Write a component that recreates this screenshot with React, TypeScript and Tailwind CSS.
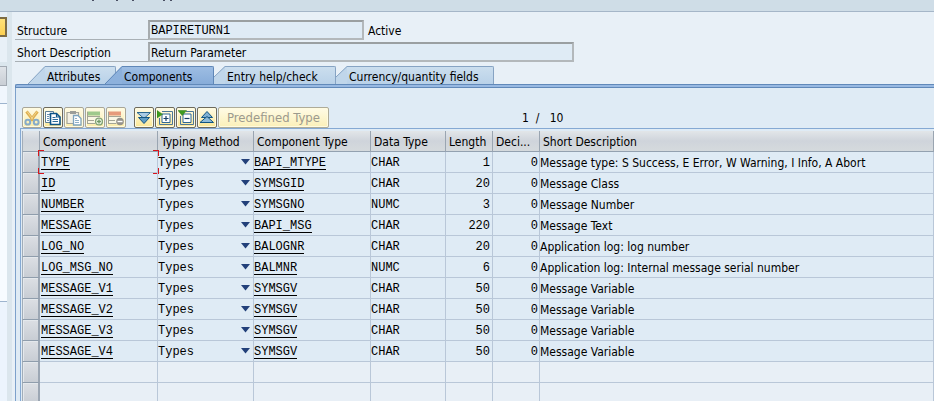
import React from "react";

type Row = {
  component: string;
  type: string;
  dataType: string;
  length: number;
  decimals: number;
  description: string;
};

const rows: Row[] = [
  { component: "TYPE", type: "BAPI_MTYPE", dataType: "CHAR", length: 1, decimals: 0, description: "Message type: S Success, E Error, W Warning, I Info, A Abort" },
  { component: "ID", type: "SYMSGID", dataType: "CHAR", length: 20, decimals: 0, description: "Message Class" },
  { component: "NUMBER", type: "SYMSGNO", dataType: "NUMC", length: 3, decimals: 0, description: "Message Number" },
  { component: "MESSAGE", type: "BAPI_MSG", dataType: "CHAR", length: 220, decimals: 0, description: "Message Text" },
  { component: "LOG_NO", type: "BALOGNR", dataType: "CHAR", length: 20, decimals: 0, description: "Application log: log number" },
  { component: "LOG_MSG_NO", type: "BALMNR", dataType: "NUMC", length: 6, decimals: 0, description: "Application log: Internal message serial number" },
  { component: "MESSAGE_V1", type: "SYMSGV", dataType: "CHAR", length: 50, decimals: 0, description: "Message Variable" },
  { component: "MESSAGE_V2", type: "SYMSGV", dataType: "CHAR", length: 50, decimals: 0, description: "Message Variable" },
  { component: "MESSAGE_V3", type: "SYMSGV", dataType: "CHAR", length: 50, decimals: 0, description: "Message Variable" },
  { component: "MESSAGE_V4", type: "SYMSGV", dataType: "CHAR", length: 50, decimals: 0, description: "Message Variable" },
];

const mono = "font-['Liberation_Mono',monospace] text-[12px]";

/* ---------- toolbar icons ---------- */

function Icon({ children }: { children: React.ReactNode }) {
  return (
    <svg width="16" height="16" viewBox="0 0 16 16" fill="none" aria-hidden="true">
      {children}
    </svg>
  );
}

const CutIcon = () => (
  <Icon>
    <path d="M2.500 1.500l7 9M13.500 1.500l-7 9" stroke="#dfb051" strokeWidth="3" />
    <path d="M3 1.500l6 8M13 1.500l-6 8" stroke="#f4dc9a" strokeWidth="0.800" />
    <circle cx="3.800" cy="12.200" r="2.400" stroke="#86abc9" strokeWidth="2" />
    <circle cx="12.200" cy="12.200" r="2.400" stroke="#86abc9" strokeWidth="2" />
  </Icon>
);

const CopyIcon = () => (
  <Icon>
    <path d="M0.500 1.500h8v11h-8z" fill="#fff" stroke="#5d7f97" />
    <path d="M2 4.500h3M2 6.500h2M2 8.500h2M2 10.500h2" stroke="#6c93b4" />
    <path d="M5.500 3.500h6l3.500 3.500v7.500H5.500z" fill="#fff" stroke="#0d5487" strokeWidth="1.600" />
    <path d="M11.500 3.500V7H15" stroke="#0d5487" strokeWidth="1.200" />
    <path d="M7.500 7.500h3M7.500 9.500H13M7.500 11.500H13" stroke="#2c6a9a" />
  </Icon>
);

const PasteIcon = () => (
  <Icon>
    <path d="M1 2.500h11.500v11H1z" fill="#f4f1e4" stroke="#a3a59c" strokeWidth="1.200" />
    <path d="M4 1h6v3H4z" fill="#9b9d98" />
    <path d="M7.500 5.500h4.500l3 3v6.500H7.500z" fill="#fff" stroke="#7da4bf" strokeWidth="1.300" />
    <path d="M9 8.500h2M9 10.500h4M9 12.500h4" stroke="#8fb0c8" />
  </Icon>
);

const rulings = "M0.500 2v12M1 6.500h12M1 10.500h6M1 13.500h7";

const InsertIcon = () => (
  <Icon>
    <path d="M1 6.500h12v7H1z" fill="#faf7e4" />
    <path d="M0 1.500h13v4H0z" fill="#9fc98c" />
    <path d={rulings} stroke="#a4a595" />
    <circle cx="12" cy="11.500" r="3.400" fill="#f4f8ea" stroke="#83a578" strokeWidth="1.400" />
    <path d="M12 9.500v4M10 11.500h4" stroke="#6f9a66" strokeWidth="1.400" />
  </Icon>
);

const DeleteIcon = () => (
  <Icon>
    <path d="M1 6.500h12v7H1z" fill="#faf7e4" />
    <path d="M0 1.500h13v4H0z" fill="#e69b7b" />
    <path d={rulings} stroke="#a4a595" />
    <circle cx="12" cy="11.500" r="3.800" fill="#96938c" />
    <path d="M9.500 11.500h5" stroke="#fff" strokeWidth="1.400" />
  </Icon>
);

const DownIcon = () => (
  <Icon>
    <path d="M1 2.500h13.500L8 8.500z" fill="#a9cbe4" stroke="#2a678f" />
    <path d="M2.500 7.500h11L8 13.500z" fill="#5e9cc4" stroke="#125583" />
  </Icon>
);

const UpIcon = () => (
  <Icon>
    <path d="M8 1.500l5.500 6h-11z" fill="#7fb0d4" stroke="#125583" />
    <path d="M8 6.500l6.500 6H1z" fill="#8fbcda" stroke="#125583" />
  </Icon>
);

const ExpandIcon = () => (
  <Icon>
    <path d="M5 1.500h10.500v13h-13V8" stroke="#4a7698" />
    <path d="M5 4h8v8.500H5z" fill="#fff" stroke="#2d6795" />
    <path d="M9 6v5M6.500 8.500h5" stroke="#173f68" strokeWidth="1.200" />
    <path d="M0 0.500l5.500 3.800L0 8z" fill="#3e9b1f" stroke="#2c7a16" strokeWidth="0.500" />
  </Icon>
);

const CollapseIcon = () => (
  <Icon>
    <path d="M8 1.500h7.500v13h-13V6" stroke="#4a7698" />
    <path d="M5 4h8v8.500H5z" fill="#fff" stroke="#2d6795" />
    <path d="M6.500 8.500h5" stroke="#173f68" strokeWidth="1.200" />
    <path d="M0 0.500h8.500L4.200 5.500z" fill="#3e9b1f" stroke="#2c7a16" strokeWidth="0.500" />
  </Icon>
);

function ToolButton({ label, disabled, children }: { label: string; disabled?: boolean; children: React.ReactNode }) {
  return (
    <button
      type="button"
      aria-label={label}
      disabled={disabled}
      className="flex h-[21px] w-5 items-center justify-center rounded-[2px] border border-[#6e6a5c] bg-linear-to-b from-[#fffbe6] to-[#fbe794] shadow-[inset_0_0_0_1px_#fffbe0] disabled:border-[#a9a698] disabled:to-[#fbeca8]"
    >
      {children}
    </button>
  );
}

/* ---------- tabs ---------- */

function Tab({ label, className, active, tucked }: { label: string; className: string; active?: boolean; tucked?: boolean }) {
  const fill = active ? "#8db1dc" : "#c0d6ea";
  const body = active
    ? "bg-linear-to-b from-[#9dbde3] to-[#87acd9] border-[#5f87b8]"
    : "bg-linear-to-b from-[#cbdeee] to-[#b9d1e8] border-[#86a3c3]";
  const line = active ? "#5f87b8" : "#86a3c3";
  return (
    <button type="button" role="tab" aria-selected={!!active} className={`flex h-[18px] shrink-0 ${className}`}>
      {tucked ? (
        <svg width="11" height="18" viewBox="0 0 11 18" className="shrink-0" aria-hidden="true">
          <path d="M0 11L11 0V18H0z" fill={fill} />
          <path d="M0 11L11 0.500" stroke={line} fill="none" />
        </svg>
      ) : (
        <svg width="17" height="18" viewBox="0 0 17 18" className="shrink-0" aria-hidden="true">
          <path d="M0 18L17 0V18z" fill={fill} />
          <path d="M0 18L17 0.500" stroke={line} fill="none" />
        </svg>
      )}
      <span className={`h-[18px] flex-1 rounded-tr-[2px] border-t border-r pl-0.5 text-left leading-5 whitespace-nowrap ${body}`}>
        {label}
      </span>
    </button>
  );
}

/* ---------- header fields ---------- */

function Field({ id, label, value, inputClass, after }: { id: string; label: string; value: string; inputClass: string; after?: string }) {
  return (
    <div className="flex h-5 items-stretch">
      <label htmlFor={id} className="w-[133px] shrink-0 border-b border-[#a9b0b5] pl-0.5 leading-[22px]">
        {label}
      </label>
      <input
        id={id}
        readOnly
        defaultValue={value}
        className={`min-w-0 border-2 border-[#b3b8bb] border-t-[#9a9fa1] border-l-[#a6abae] bg-[#dfebf5] px-px pt-0.5 outline-none ${inputClass}`}
      />
      {after && <span className="pl-1 leading-[22px]">{after}</span>}
    </div>
  );
}

/* ---------- component table ---------- */

const headCell =
  "h-[21px] overflow-hidden border-r border-b border-r-[#9aa5b1] border-b-[#93a1b0] bg-linear-to-b from-[#e2e6e9] via-[#cfd4db] to-[#d5dadd] p-0 pt-0.5 pl-[3px] text-left font-normal whitespace-nowrap";
const cell = "h-[21px] border-r border-b border-[#b9c7d8] p-0 whitespace-nowrap";
const textCell = `${cell} pt-0.5 align-top leading-[18px]`;

function RowSelector({ label }: { label: string }) {
  return (
    <td className="h-[21px] border-r-2 border-b border-l border-r-[#9ba6b3] border-b-[#8f9dac] border-l-[#a2adb8] p-0">
      <button
        type="button"
        aria-label={label}
        className="block h-5 w-full bg-linear-to-b from-[#dcdfe4] to-[#c8cdd4] shadow-[inset_1px_1px_0_#e4e8ec]"
      />
    </td>
  );
}

function FocusCorners() {
  return (
    <span aria-hidden="true" className="pointer-events-none absolute -inset-x-0.5 -inset-y-0.5">
      <span className="absolute top-0 left-0 size-1.5 border-t border-l border-[#d8141c]" />
      <span className="absolute top-0 right-0 size-1.5 border-t border-r border-[#d8141c]" />
      <span className="absolute bottom-0 left-0 size-1.5 border-b border-l border-[#d8141c]" />
      <span className="absolute right-0 bottom-0 size-1.5 border-r border-b border-[#d8141c]" />
    </span>
  );
}

function CellLink({ children }: { children: string }) {
  return (
    <a href="#" className={`inline-block border-b border-black align-top ${mono}`}>
      <span className="block h-[15px] leading-[18px]">{children}</span>
    </a>
  );
}

function ComponentTable() {
  return (
    <table className="w-full table-fixed border-separate border-spacing-0">
      <colgroup>
        <col className="w-[18px]" />
        <col className="w-[118px]" />
        <col className="w-[96px]" />
        <col className="w-[117px]" />
        <col className="w-[75px]" />
        <col className="w-[47px]" />
        <col className="w-[47px]" />
        <col />
      </colgroup>
      <thead>
        <tr>
          <th className={`${headCell} border-l border-l-[#a2adb8]`} />
          <th className={headCell}>Component</th>
          <th className={headCell}>Typing Method</th>
          <th className={headCell}>Component Type</th>
          <th className={headCell}>Data Type</th>
          <th className={headCell}>Length</th>
          <th className={headCell}>Deci...</th>
          <th className={headCell}>Short Description</th>
        </tr>
      </thead>
      <tbody>
        {rows.map((row, i) => (
          <tr key={row.component}>
            <RowSelector label={`Select ${row.component}`} />
            <td className={`${textCell} relative pl-px`}>
              <CellLink>{row.component}</CellLink>
              {i === 0 && <FocusCorners />}
            </td>
            <td className={cell}>
              <div className="flex h-5 items-center">
                <select
                  aria-label={`Typing method of ${row.component}`}
                  defaultValue="Types"
                  className={`h-5 min-w-0 flex-1 appearance-none bg-transparent p-0 pt-0.5 outline-none ${mono}`}
                >
                  <option>Types</option>
                </select>
                <svg width="9" height="6" viewBox="0 0 9 6" className="mr-[3px] shrink-0" aria-hidden="true">
                  <path d="M0 0h9L4.500 5.500z" fill="#22407a" />
                </svg>
              </div>
            </td>
            <td className={textCell}>
              <CellLink>{row.type}</CellLink>
            </td>
            <td className={`${textCell} ${mono}`}>{row.dataType}</td>
            <td className={`${textCell} pr-0.5 text-right ${mono}`}>{row.length}</td>
            <td className={`${textCell} pr-px text-right ${mono}`}>{row.decimals}</td>
            <td className={textCell}>{row.description}</td>
          </tr>
        ))}
        {[11, 12].map((n) => (
          <tr key={n} className="bg-[#e8eff6]">
            <RowSelector label={`Select row ${n}`} />
            {[0, 1, 2, 3, 4, 5, 6].map((c) => (
              <td key={c} className={cell} />
            ))}
          </tr>
        ))}
      </tbody>
    </table>
  );
}

export default function App() {
  return (
    <div className="flex h-screen flex-col overflow-hidden bg-[#e8f0f7] font-['DejaVu_Sans_Condensed','DejaVu_Sans',sans-serif] text-[12px] leading-4 text-black">
      <header className="h-3 shrink-0 border-b border-[#a5b6c8] bg-[#cfdde7]">
        <svg width="200" height="1" viewBox="0 0 200 1" className="block" aria-hidden="true">
          <path d="M92 0h2v1h-2zM116 0h2v1h-2zM132 0h2v1h-2zM163 0h2v1h-2zM170 0h2v1h-2z" fill="#4a4f63" />
        </svg>
      </header>

      <div className="flex min-h-0 flex-1">
        <aside className="flex w-3 shrink-0 flex-col border-r-[5px] border-[#dbe6ed]">
          <button
            type="button"
            aria-label="Navigation"
            className="mt-[5px] h-5 shrink-0 border-2 border-l-0 border-[#7d6c45] bg-linear-to-b from-[#ffe27a] to-[#fcd050]"
          />
          <div className="mt-[25px] h-1 shrink-0 bg-[#dbe6ed]" />
          <div className="h-5 shrink-0 border border-l-0 border-[#a2a9b2] bg-linear-to-b from-[#dfe3e8] to-[#c9ced5]" />
          <div className="h-[18px] shrink-0 border-b border-[#9db4ce] bg-[#f0f6fd]" />
          <div className="h-[198px] shrink-0 border-b border-[#9db4ce] bg-[#f7fbff]" />
          <div className="flex-1 bg-[#ecf4fd]" />
        </aside>

        <main className="flex min-w-0 flex-1 flex-col pt-2 pl-[3px]">
          <form className="flex flex-col gap-0.5">
            <Field id="structure" label="Structure" value="BAPIRETURN1" after="Active" inputClass={`w-[216px] ${mono}`} />
            <Field id="description" label="Short Description" value="Return Parameter" inputClass="w-[426px]" />
          </form>

          <div role="tablist" className="mt-1 flex shrink-0 pl-[13px]">
            <Tab label="Attributes" className="w-[88px]" />
            <Tab label="Components" active className="relative -ml-[11px] w-[109px]" />
            <Tab label="Entry help/check" tucked className="w-[122px]" />
            <Tab label="Currency/quantity fields" tucked className="w-[158px]" />
          </div>

          <section className="flex min-h-0 flex-1 flex-col">
            <div className="h-1 shrink-0 rounded-tl-[2px] border-y border-l border-[#6189b9] bg-[#98b9e2]" />
            <div className="flex min-h-0 flex-1 flex-col border-l border-[#7da1cb] bg-[#dfebf5] pt-[19px] pl-1">
              <div className="flex h-[21px] shrink-0 items-center gap-px pl-0.5">
                <ToolButton label="Cut" disabled><CutIcon /></ToolButton>
                <ToolButton label="Copy"><CopyIcon /></ToolButton>
                <ToolButton label="Paste" disabled><PasteIcon /></ToolButton>
                <ToolButton label="Insert row" disabled><InsertIcon /></ToolButton>
                <ToolButton label="Delete row" disabled><DeleteIcon /></ToolButton>
                <span className="w-1.5" />
                <ToolButton label="Last page"><DownIcon /></ToolButton>
                <ToolButton label="Expand"><ExpandIcon /></ToolButton>
                <ToolButton label="Collapse"><CollapseIcon /></ToolButton>
                <ToolButton label="First page"><UpIcon /></ToolButton>
                <button
                  type="button"
                  disabled
                  className="h-[21px] w-[111px] rounded-[2px] border border-[#aeab98] bg-linear-to-b from-[#fffbe6] to-[#fbf0b8] text-[13px] text-[#9c9a8e] shadow-[inset_0_0_0_1px_#fffbe0]"
                >
                  Predefined Type
                </button>
                <span className="w-[191px]" />
                <span className="whitespace-pre">{"1  /   10"}</span>
              </div>
              <div className="flex-1 border-t border-l border-[#85a9d3] pt-0.5 pl-px">
                <ComponentTable />
              </div>
            </div>
          </section>
        </main>
      </div>
    </div>
  );
}
